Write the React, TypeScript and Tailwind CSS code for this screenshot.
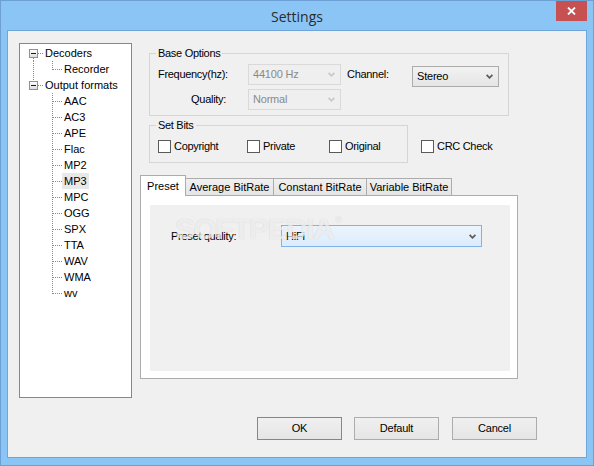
import React from "react";

type SelVariant = "disabled" | "normal" | "focused";

const Chevron = ({ color }: { color: string }) => (
  <svg width="7" height="5" viewBox="0 0 7 5" className="shrink-0">
    <path d="M0.6 0.8 L3.5 3.8 L6.4 0.8" fill="none" stroke={color} strokeWidth="1.7" />
  </svg>
);

function Select({ value, className, variant }: { value: string; className: string; variant: SelVariant }) {
  const styles: Record<SelVariant, string> = {
    disabled: "border-[#d9d9d9] bg-[#efefef] text-[#8a8a8a]",
    normal: "border-[#acacac] bg-gradient-to-b from-[#f2f2f2] to-[#e5e5e5] text-black",
    focused: "border-[#7eb4ea] bg-gradient-to-b from-[#ecf4fc] to-[#dcecfc] text-black",
  };
  const chev = variant === "disabled" ? "#c8c8c8" : "#5a5a5a";
  return (
    <div className={`${className} ${styles[variant]} border flex items-center justify-between pl-[4px] pr-[5px] text-[11px] tracking-[-0.2px]`}>
      <span>{value}</span>
      <Chevron color={chev} />
    </div>
  );
}

function Check({ label }: { label: string }) {
  return (
    <div className="flex items-center h-[13px]">
      <div className="w-[13px] h-[13px] border border-[#5a5a5a] bg-white shrink-0" />
      <span className="ml-[3px] text-[11px] leading-[13px] tracking-[-0.3px]">{label}</span>
    </div>
  );
}

function Group({ label, className, children }: { label: string; className: string; children?: React.ReactNode }) {
  return (
    <div className={`${className} relative border border-[#d5d5d5]`}>
      <span className="absolute left-[6px] top-[-8px] px-[2px] bg-[#f0f0f0] text-[11px] leading-[14px] tracking-[-0.3px]">
        {label}
      </span>
      {children}
    </div>
  );
}

type Kind = "rootFirst" | "rootLast" | "childMid" | "childLast" | "childUnderFirst";

const dot = { stroke: "#8a8a8a", strokeWidth: 1, strokeDasharray: "1 1", shapeRendering: "crispEdges" as const };

function Connector({ kind }: { kind: Kind }) {
  if (kind === "rootFirst" || kind === "rootLast") {
    return (
      <svg width="23" height="16" viewBox="0 0 23 16" className="shrink-0">
        <defs>
          <linearGradient id={`g-${kind}`} x1="0" y1="0" x2="0" y2="1">
            <stop offset="0" stopColor="#ffffff" />
            <stop offset="1" stopColor="#dcdcdc" />
          </linearGradient>
        </defs>
        {kind === "rootFirst" ? (
          <line x1="13.5" y1="13" x2="13.5" y2="16" {...dot} />
        ) : (
          <line x1="13.5" y1="0" x2="13.5" y2="4" {...dot} />
        )}
        <rect x="9.5" y="4.5" width="8" height="8" fill={`url(#g-${kind})`} stroke="#919191" shapeRendering="crispEdges" />
        <line x1="11" y1="8.5" x2="16" y2="8.5" stroke="#1a1a1a" strokeWidth="1" shapeRendering="crispEdges" />
        <line x1="18" y1="8.5" x2="23" y2="8.5" {...dot} />
      </svg>
    );
  }
  return (
    <svg width="42" height="16" viewBox="0 0 42 16" className="shrink-0">
      {kind === "childUnderFirst" && <line x1="13.5" y1="0" x2="13.5" y2="16" {...dot} />}
      {kind === "childMid" ? (
        <line x1="32.5" y1="0" x2="32.5" y2="16" {...dot} />
      ) : (
        <line x1="32.5" y1="0" x2="32.5" y2="9" {...dot} />
      )}
      <line x1="33" y1="8.5" x2="42" y2="8.5" {...dot} />
    </svg>
  );
}

const treeRows: { label: string; kind: Kind; selected?: boolean }[] = [
  { label: "Decoders", kind: "rootFirst" },
  { label: "Recorder", kind: "childUnderFirst" },
  { label: "Output formats", kind: "rootLast" },
  { label: "AAC", kind: "childMid" },
  { label: "AC3", kind: "childMid" },
  { label: "APE", kind: "childMid" },
  { label: "Flac", kind: "childMid" },
  { label: "MP2", kind: "childMid" },
  { label: "MP3", kind: "childMid", selected: true },
  { label: "MPC", kind: "childMid" },
  { label: "OGG", kind: "childMid" },
  { label: "SPX", kind: "childMid" },
  { label: "TTA", kind: "childMid" },
  { label: "WAV", kind: "childMid" },
  { label: "WMA", kind: "childMid" },
  { label: "wv", kind: "childLast" },
];

function Button({ label, primary, className }: { label: string; primary?: boolean; className?: string }) {
  return (
    <div
      className={`${className ?? ""} w-[85px] h-[23px] border ${
        primary ? "border-[#3399ff]" : "border-[#acacac]"
      } bg-gradient-to-b from-[#f0f0f0] to-[#e5e5e5] flex items-center justify-center text-[11px] tracking-[-0.2px]`}
    >
      {label}
    </div>
  );
}

export default function App() {
  return (
    <div className="w-[594px] h-[466px] bg-[#8bc5f6] border border-[#6c9fd4] flex flex-col font-['Liberation_Sans',Arial,sans-serif] text-black select-none">
      {/* Title bar */}
      <div className="relative h-[29px] flex items-center justify-center pt-[2px]">
        <span className="font-['Open_Sans',sans-serif] text-[14px] text-[#2b2b2b]">Settings</span>
        <div className="absolute right-[6px] top-0 w-[31px] h-[20px] bg-[#c75050] flex items-center justify-center">
          <svg width="9" height="8" viewBox="0 0 9 8">
            <path d="M1 0.5 L8 7.5 M8 0.5 L1 7.5" stroke="#ffffff" strokeWidth="1.8" fill="none" />
          </svg>
        </div>
      </div>

      {/* Client area */}
      <div className="mx-[6px] h-[428px] border border-[#70a5da] bg-[#f0f0f0] flex flex-col pl-[11px] pt-[12px]">
        <div className="flex">
          {/* Tree */}
          <div className="w-[113px] h-[355px] border border-[#828790] bg-white pt-[1px] text-[11px] leading-[16px] shrink-0">
            {treeRows.map((r) => (
              <div key={r.label} className="flex h-[16px] items-stretch">
                <Connector kind={r.kind} />
                <span className={`px-[2px] ${r.selected ? "bg-[#e8e8e8]" : ""}`}>{r.label}</span>
              </div>
            ))}
          </div>

          {/* Right column */}
          <div className="ml-[8px] w-[378px] flex flex-col">
            <Group label="Base Options" className="mt-[10px] ml-[9px] w-[360px] h-[63px]">
              <div className="pt-[10px] pl-[8px] flex flex-col gap-[4px]">
                <div className="flex items-start h-[21px]">
                  <span className="w-[90px] leading-[21px] text-[11px] tracking-[-0.3px]">Frequency(hz):</span>
                  <Select value="44100 Hz" variant="disabled" className="w-[93px] h-[21px]" />
                  <span className="ml-[6px] w-[65px] leading-[21px] text-[11px] tracking-[-0.3px]">Channel:</span>
                  <Select value="Stereo" variant="normal" className="w-[87px] h-[21px] mt-[2px]" />
                </div>
                <div className="flex items-start h-[21px]">
                  <span className="w-[90px] pr-[22px] text-right leading-[21px] text-[11px] tracking-[-0.3px]">Quality:</span>
                  <Select value="Normal" variant="disabled" className="w-[93px] h-[21px]" />
                </div>
              </div>
            </Group>

            <div className="mt-[9px] flex items-start">
              <Group label="Set Bits" className="ml-[9px] w-[259px] h-[38px]">
                <div className="mt-[14px] pl-[8px] flex">
                  <div className="w-[89px]">
                    <Check label="Copyright" />
                  </div>
                  <div className="w-[82px]">
                    <Check label="Private" />
                  </div>
                  <div>
                    <Check label="Original" />
                  </div>
                </div>
              </Group>
              <div className="ml-[13px] mt-[15px]">
                <Check label="CRC Check" />
              </div>
            </div>

            {/* Tabs */}
            <div className="mt-[12px] flex flex-col">
              <div className="h-[20px] flex items-end text-[11px]">
                <div className="relative z-10 w-[46px] h-[21px] mb-[-1px] bg-white border-l border-t border-r border-[#acacac] flex items-center justify-center">
                  Preset
                </div>
                <div className="w-[88px] h-[17px] border-t border-r border-[#acacac] bg-gradient-to-b from-[#f0f0f0] to-[#e5e5e5] flex items-center justify-center">
                  Average BitRate
                </div>
                <div className="w-[93px] h-[17px] border-t border-r border-[#acacac] bg-gradient-to-b from-[#f0f0f0] to-[#e5e5e5] flex items-center justify-center">
                  Constant BitRate
                </div>
                <div className="w-[85px] h-[17px] border-t border-r border-[#acacac] bg-gradient-to-b from-[#f0f0f0] to-[#e5e5e5] flex items-center justify-center">
                  Variable BitRate
                </div>
              </div>
              <div className="relative w-[378px] h-[184px] border border-[#acacac] bg-white pt-[9px] pl-[9px] pr-[7px] pb-[7px] flex">
                <div className="flex-1 bg-[#f0f0f0] pt-[20px] pl-[21px]">
                  <div className="flex items-center h-[22px]">
                    <span className="w-[110px] text-[11px] tracking-[-0.3px]">Preset quality:</span>
                    <Select value="HiFi" variant="focused" className="w-[201px] h-[22px]" />
                  </div>
                </div>
                <div className="pointer-events-none absolute left-[34px] top-[19px] z-20 flex items-start text-[30px] leading-[28px] font-bold tracking-[-1.5px] text-white/70 [text-shadow:0_0_1px_rgba(0,0,0,0.18)]">
                  SOFTPEDIA
                  <span className="text-[9px] leading-[10px] font-normal tracking-normal ml-[2px]">®</span>
                </div>
              </div>
            </div>
          </div>
        </div>

        {/* Buttons */}
        <div className="mt-[19px] flex justify-end pr-[49px]">
          <Button label="OK" primary />
          <Button label="Default" className="ml-[12px]" />
          <Button label="Cancel" className="ml-[13px]" />
        </div>
      </div>
    </div>
  );
}
